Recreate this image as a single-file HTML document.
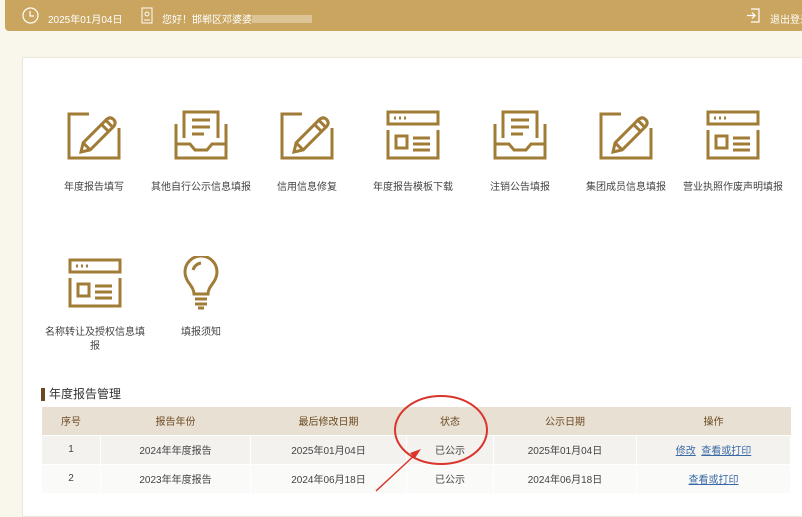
<!DOCTYPE html>
<html><head><meta charset="utf-8"><style>
*{margin:0;padding:0;box-sizing:border-box}
body{width:802px;height:500px;overflow:hidden;background:#f9f6ec;font-family:"Liberation Sans","Noto Sans CJK SC",sans-serif;position:relative}
.hdr{position:absolute;left:5px;top:0;width:800px;height:31px;background:#c9a55f;border-radius:0 0 4px 4px;color:#fff;font-size:10px}
.hdr span{position:absolute;top:11px;white-space:nowrap}
.panel{position:absolute;left:22px;top:57px;width:790px;height:460px;background:#fff;border:1px solid #ece6d8}
.it{position:absolute;width:130px;text-align:center;font-size:10px;color:#444}
.it svg{display:block;margin:0 auto 16px}
.ttl{position:absolute;left:41px;top:388px;font-size:12px;color:#333;border-left:4px solid #6b4a22;padding-left:4px;line-height:13px}
table{position:absolute;left:41px;top:407px;border-collapse:collapse;font-size:10px;color:#444}
th{background:#e8e0d3;height:28px;color:#6b4a22;font-weight:normal}
td{height:29px;text-align:center;vertical-align:middle;border:1px solid #fff;background:#f4f2ee}
tr.r2 td{background:#fafaf8}
a{color:#3a6aa6;text-decoration:underline}
</style></head><body>
<div class="hdr">
<svg style="position:absolute;left:17px;top:7px" width="17" height="17" viewBox="0 0 17 17"><circle cx="8.5" cy="8.5" r="7.5" fill="none" stroke="#fff" stroke-width="1.2"/><path d="M8 4V9H12" fill="none" stroke="#fff" stroke-width="1.2"/></svg>
<span style="left:43px">2025年01月04日</span>
<svg style="position:absolute;left:136px;top:7px" width="12" height="17" viewBox="0 0 12 17"><rect x="1" y="1" width="10" height="15" fill="none" stroke="#fff"/><circle cx="6" cy="7" r="2" fill="none" stroke="#fff"/><path d="M3 13H9" stroke="#fff"/></svg>
<span style="left:157px">您好！邯郸区邓婆婆<span style="position:relative;top:0;display:inline-block;width:60px;height:8px;background:#dcc495"></span></span>
<svg style="position:absolute;left:741px;top:8px" width="15" height="15" viewBox="0 0 15 15"><path d="M5 1H13V14H5M1 7.5H9M6 4.5L9 7.5L6 10.5" fill="none" stroke="#fff" stroke-width="1.2"/></svg>
<span style="left:765px">退出登录</span>
</div>
<div class="panel"></div>
<svg width="0" height="0" style="position:absolute"><defs>
<g id="pen" fill="none" stroke="#a07c37" stroke-width="3"><path d="M24 6H4V50H54V20"/><g transform="translate(16,44) rotate(-45)"><path d="M0 0L8 -5H40V5H8Z"/><path d="M34 -5V5M8 -5V5"/><path d="M40 -5q6 0 6 5q0 5 -6 5"/></g></g>
<g id="box" fill="none" stroke="#a07c37" stroke-width="3"><path d="M4 16V50H54V16"/><path d="M4 36H18L23 42H35L40 36H54"/><path d="M12 30V4H46V30"/><path d="M20 12H38M20 19H38M20 26H32"/></g>
<g id="win" fill="none" stroke="#a07c37" stroke-width="3"><rect x="4" y="4" width="50" height="12"/><path d="M4 22V50H54V22"/><rect x="12" y="28" width="11" height="12"/><path d="M29 30H46M29 36H46M29 42H46"/><path d="M10 10h2M15 10h2M20 10h2"/></g>
</defs></svg>
<div class="it" style="left:29px;top:108px"><svg width="58" height="54"><use href="#pen"/></svg>年度报告填写</div>
<div class="it" style="left:136px;top:108px"><svg width="58" height="54"><use href="#box"/></svg>其他自行公示信息填报</div>
<div class="it" style="left:242px;top:108px"><svg width="58" height="54"><use href="#pen"/></svg>信用信息修复</div>
<div class="it" style="left:348px;top:108px"><svg width="58" height="54"><use href="#win"/></svg>年度报告模板下载</div>
<div class="it" style="left:455px;top:108px"><svg width="58" height="54"><use href="#box"/></svg>注销公告填报</div>
<div class="it" style="left:561px;top:108px"><svg width="58" height="54"><use href="#pen"/></svg>集团成员信息填报</div>
<div class="it" style="left:668px;top:108px"><svg width="58" height="54"><use href="#win"/></svg>营业执照作废声明填报</div>
<div class="it" style="left:44px;top:256px;width:102px;line-height:14px"><svg width="58" height="54" style="margin-bottom:16px"><use href="#win"/></svg>名称转让及授权信息填报</div>
<div class="it" style="left:136px;top:256px;line-height:14px"><svg width="58" height="54" viewBox="0 0 58 54" style="margin-bottom:16px"><g fill="none" stroke="#a07c37" stroke-width="3"><path d="M22 38C22 30 13 26 13 16A16 16 0 0 1 45 16C45 26 36 30 36 38Z"/><path d="M21 14q2 -6 8 -7"/><path d="M23 43H35M23 48H35M26 52H32"/></g></svg>填报须知</div>
<div class="ttl">年度报告管理</div>
<table>
<tr><th style="width:59px">序号</th><th style="width:150px">报告年份</th><th style="width:156px">最后修改日期</th><th style="width:87px">状态</th><th style="width:143px">公示日期</th><th style="width:154px">操作</th></tr>
<tr><td>1</td><td>2024年年度报告</td><td>2025年01月04日</td><td>已公示</td><td>2025年01月04日</td><td><a>修改</a>&nbsp; <a>查看或打印</a></td></tr>
<tr class="r2"><td>2</td><td>2023年年度报告</td><td>2024年06月18日</td><td>已公示</td><td>2024年06月18日</td><td><a>查看或打印</a></td></tr>
</table>
<svg style="position:absolute;left:0;top:0" width="802" height="500"><ellipse cx="441" cy="430" rx="46" ry="34" fill="none" stroke="#d9352c" stroke-width="2"/><path d="M376 491L418 452" stroke="#d9352c" stroke-width="1.5"/><path d="M421 449L410 453L415 458Z" fill="#d9352c"/></svg>
</body></html>
